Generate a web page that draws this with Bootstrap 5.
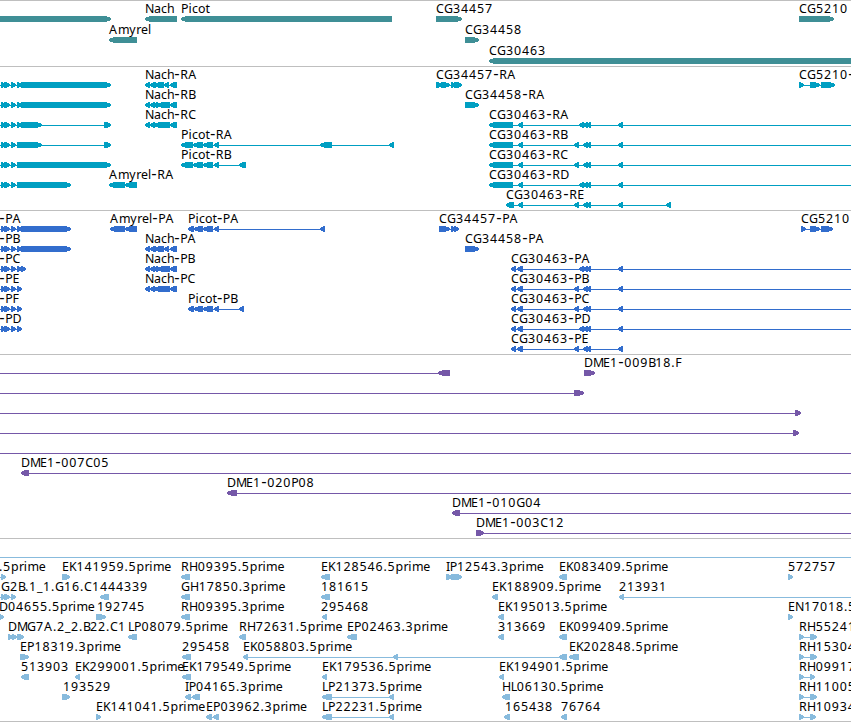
<!DOCTYPE html>
<html lang="en">
<head>
<meta charset="utf-8">
<title>Genome tracks</title>
<link rel="stylesheet" href="https://cdn.jsdelivr.net/npm/bootstrap@5.3.0/dist/css/bootstrap.min.css">
<style>
body{background:#fff;overflow:hidden}
.browser-view{width:851px;height:722px}
.track{border-top:1px solid #bfbfbf}
.track svg{width:851px;height:100%}
.track text{font-family:"Noto Sans","Open Sans",sans-serif;font-size:12.4px;fill:#000}
.track .dash{font-family:"DejaVu Sans",sans-serif;font-size:15px}
.track polygon,.track rect{fill:var(--ink);shape-rendering:crispEdges}
.genes{--ink:#3f8f96;height:66px}
.transcripts{--ink:#009fc2;height:144px}
.proteins{--ink:#326dcd;height:144px}
.clones{--ink:#7558a8;height:184px}
.insertions{--ink:#88bbdd;height:183px}
</style>
<script src="https://cdn.jsdelivr.net/npm/bootstrap@5.3.0/dist/js/bootstrap.bundle.min.js"></script>
</head>
<body>
<main class="browser-view container-fluid p-0 m-0 d-flex flex-column overflow-hidden">
<section class="track genes flex-shrink-0"><svg class="d-block" id="genes"></svg></section>
<section class="track transcripts flex-shrink-0"><svg class="d-block" id="transcripts"></svg></section>
<section class="track proteins flex-shrink-0"><svg class="d-block" id="proteins"></svg></section>
<section class="track clones flex-shrink-0"><svg class="d-block" id="clones"></svg></section>
<section class="track insertions flex-shrink-0"><svg class="d-block" id="insertions"></svg></section>
<div class="track flex-shrink-0"></div>
</main>
<script>
// Character advances of the label grid, in pixels
const ADV={C:8,G:9,N:9,P:7.4,R:8,A:9,E:7,K:7.5,H:8.7,L:6,D:9,M:10,B:7,F:7,I:3.7,a:7,c:6,h:7,i:3.7,o:7.5,t:4,m:11.3,y:7,r:4.7,e:7,l:3,p:8,'.':4,'-':6.2,_:6};
// Each item: row, label, label x, strand, exons "a:b a:b", optional line start and end
function draw(id,items,top,pitch){
  let out='';
  for(const [row,label,lx,dir,exons,l0,l1] of items){
    const y=top+row*pitch;
    const ex=exons?exons.split(' ').map(s=>s.split(':').map(Number)):[];
    const s=l0??(ex.length?ex[0][0]+1:0), e=l1??(ex.length?ex[ex.length-1][1]-1:0);
    out+=`<rect x="${s}" y="${y+3}" width="${e-s}" height="1"/>`;
    for(const [a,b] of ex){
      const w=b-a,h=w>8?5:Math.min(5,w)-1;
      out+=dir=='R'
       ?`<polygon points="${a},${y} ${b-h},${y} ${b},${y+2} ${b},${y+4} ${b-h},${y+6} ${a},${y+6}"/>`
       :`<polygon points="${b},${y} ${a+h},${y} ${a},${y+2} ${a},${y+4} ${a+h},${y+6} ${b},${y+6}"/>`;
    }
    if(label){
      let x=lx;const xs=[];
      for(const c of label){xs.push((c=='-'?x+.3:x).toFixed(1));x+=ADV[c]??8}
      out+=`<text x="${xs.join(' ')}" y="${y-3}">${label.replace('-','<tspan class="dash">-</tspan>')}</text>`;
    }
  }
  document.getElementById(id).innerHTML=out;
}
draw('genes',[
[0,'',0,'R','-10:111'],[0,'Nach',145,'L','145:177'],[0,'Picot',181,'L','181:392'],
[0,'CG34457',436,'R','436:462'],[0,'CG5210',799,'R','799:834'],
[1,'Amyrel',109,'L','109:137'],[1,'CG34458',465,'R','465:479'],[2,'CG30463',489,'L','489:861']],15,21);

const S='1:6 4:10 11:16 ',A=' 579:584 583:588 586:591 618:623',B=' 574:579 583:588 586:591 618:623';
const NA='145:150 150:156 155:160 157:164 164:169 170:177',NB='145:150 150:155 153:158 157:170 170:177',NC='145:150 150:155 154:170 170:177';
draw('transcripts',[
[0,'',0,'R',S+'17:22 21:111',0],[1,'',0,'R',S+'17:22 21:111',0],[2,'',0,'R',S+'17:22 21:42 104:111',0],
[3,'',0,'R',S+'17:42 104:111',0],[4,'',0,'R',S+'17:111',0],[5,'',0,'R',S+'17:71',0],
[0,'Nach-RA',145,'L',NA],[1,'Nach-RB',145,'L',NB],[2,'Nach-RC',145,'L',NC],
[3,'Picot-RA',181,'L','181:193 193:203 203:213 214:219 320:332 389:394'],
[4,'Picot-RB',181,'L','181:193 193:203 203:213 214:219 239:246'],
[5,'Amyrel-RA',109,'L','109:125 125:137'],
[0,'CG34457-RA',436,'R','436:442 441:450 451:456 454:462'],[1,'CG34458-RA',465,'R','465:479'],
[2,'CG30463-RA',489,'L','489:513 518:523'+A,490,851],[3,'CG30463-RB',489,'L','489:513 518:523'+B,490,851],
[4,'CG30463-RC',489,'L','489:513 518:523'+B,490,851],[5,'CG30463-RD',489,'L','489:513 518:523'+A,490,851],
[6,'CG30463-RE',506,'L','506:514 518:523'+B+' 666:671'],[0,'CG5210-',799,'R','799:804 810:820 821:835']],15,20);

draw('proteins',[
[0,'-PA',-1,'R',S+'17:22 21:71',0],[1,'-PB',-1,'R',S+'17:22 21:71',0],[2,'-PC',-1,'R',S+'17:22 21:26',0],
[3,'-PE',-1,'R',S+'17:22',0],[4,'-PF',-1,'R',S+'17:22',0],[5,'-PD',-1,'R',S+'17:22',0],
[0,'Amyrel-PA',110,'L','110:125 125:137'],[0,'Picot-PA',188,'L','188:194 194:203 203:213 214:219 320:325'],
[1,'Nach-PA',145,'L',NA],[2,'Nach-PB',145,'L',NB],[3,'Nach-PC',145,'L',NC],
[4,'Picot-PB',188,'L','188:194 194:203 203:213 214:219 239:244'],
[0,'CG34457-PA',439,'R','439:450 451:455 454:459'],[1,'CG34458-PA',465,'R','465:479'],
[2,'CG30463-PA',511,'L','511:516 517:523'+A,512,851],[3,'CG30463-PB',511,'L','511:516 517:523'+B,512,851],
[4,'CG30463-PC',511,'L','511:516 517:523'+B,512,851],[5,'CG30463-PD',511,'L','511:516 517:523'+A,512,851],
[6,'CG30463-PE',511,'L','511:516 517:523'+B],[0,'CG5210',801,'R','801:806 810:820 821:833']],15,20);

draw('clones',[
[0,'',0,'L','438:450',0],[0,'DME1-009B18.F',584,'R','584:595'],[1,'',0,'R','574:584',0],
[2,'',0,'R','795:801',0],[3,'',0,'R','793:799',0],[4,'',0,'R','',0,851],
[5,'DME1-007C05',21,'L','21:29',22,851],[6,'DME1-020P08',227,'L','227:237',228,851],
[7,'DME1-010G04',452,'L','452:460',453,851],[8,'DME1-003C12',476,'R','476:484',476,851]],15,20);

draw('insertions',[
[-1,'',0,'R','',0,851],
[0,'.5prime',-1,'R','1:6',0],[0,'EK141959.5prime',62,'R','62:70'],[0,'RH09395.5prime',181,'L','181:190'],
[0,'EK128546.5prime',321,'L','321:330'],[0,'IP12543.3prime',446,'R','446:452 451:457 454:462'],
[0,'EK083409.5prime',559,'L','559:567'],[0,'572757',788,'R','788:793'],
[1,'G2B.1_1.G16.C1444339',1,'R','1:6 4:10 11:16',0],[1,'',0,'L','100:109'],[1,'GH17850.3prime',181,'L','181:190'],
[1,'181615',321,'L','321:330'],[1,'EK188909.5prime',492,'L','492:498'],[1,'213931',619,'L','619:624',620,851],
[2,'D04655.5prime',-1,'R','-3:4'],[2,'192745',97,'R','96:106'],[2,'RH09395.3prime',181,'L','181:190'],
[2,'295468',321,'L','322:327'],[2,'EK195013.5prime',498,'L','498:504'],[2,'EN17018.5',788,'R','788:793'],
[3,'DMG7A.2_2.B22.C1',8,'R','8:13 12:17 17:24'],[3,'LP08079.5prime',128,'L','128:137'],
[3,'RH72631.5prime',239,'L','239:246'],[3,'EP02463.3prime',347,'L','347:357'],[3,'313669',498,'L','498:504'],
[3,'EK099409.5prime',559,'L','559:567'],[3,'RH55241',799,'R','799:804 810:817'],
[4,'EP18319.3prime',20,'R','20:29'],[4,'295458',182,'L','182:191'],[4,'EK058803.5prime',243,'L','243:248 393:398 559:567'],
[4,'EK202848.5prime',569,'L','569:579'],[4,'RH15304',799,'R','799:804 810:817'],
[5,'513903',21,'L','21:29'],[5,'EK299001.5prime',75,'L','75:80'],[5,'EK179549.5prime',182,'L','182:191'],
[5,'EK179536.5prime',322,'L','322:327'],[5,'EK194901.5prime',499,'L','499:504'],[5,'RH09917',799,'R','799:804 810:815'],
[6,'193529',63,'R','62:70'],[6,'IP04165.3prime',185,'L','185:191 192:200'],[6,'LP21373.5prime',322,'L','322:332 389:394'],
[6,'HL06130.5prime',502,'L','502:510'],[6,'RH11005',799,'R','799:804 810:817'],
[7,'EK141041.5prime',96,'R','96:101'],[7,'EP03962.3prime',206,'L','206:212 213:219'],[7,'LP22231.5prime',322,'L','322:332 389:394'],
[7,'165438',505,'L','504:510'],[7,'76764',561,'L','561:567'],[7,'RH10934',799,'R','799:804 810:816']],35,20);
</script>
</body>
</html>
